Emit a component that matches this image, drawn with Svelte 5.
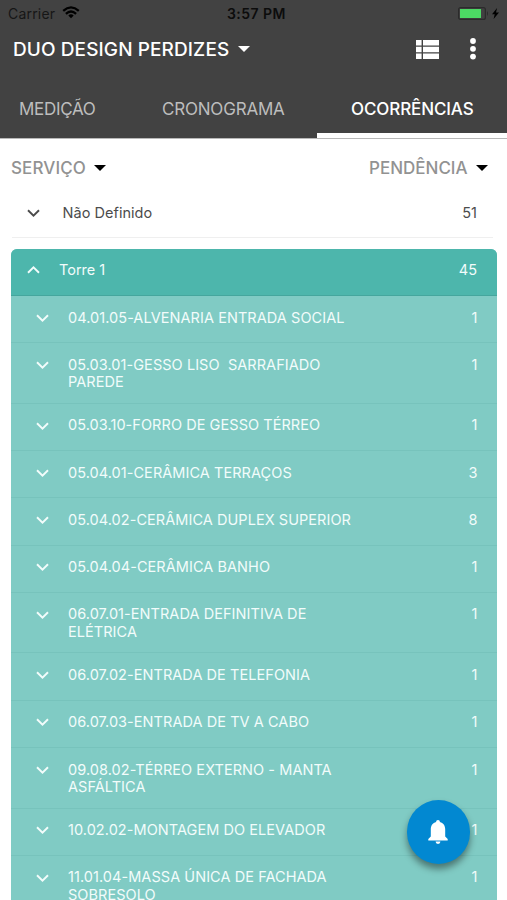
<script>
  const rows = [
    { lines: ['04.01.05-ALVENARIA ENTRADA SOCIAL'], count: 1 },
    { lines: ['05.03.01-GESSO LISO  SARRAFIADO', 'PAREDE'], count: 1 },
    { lines: ['05.03.10-FORRO DE GESSO TÉRREO'], count: 1 },
    { lines: ['05.04.01-CERÂMICA TERRAÇOS'], count: 3 },
    { lines: ['05.04.02-CERÂMICA DUPLEX SUPERIOR'], count: 8 },
    { lines: ['05.04.04-CERÂMICA BANHO'], count: 1 },
    { lines: ['06.07.01-ENTRADA DEFINITIVA DE', 'ELÉTRICA'], count: 1 },
    { lines: ['06.07.02-ENTRADA DE TELEFONIA'], count: 1 },
    { lines: ['06.07.03-ENTRADA DE TV A CABO'], count: 1 },
    { lines: ['09.08.02-TÉRREO EXTERNO - MANTA', 'ASFÁLTICA'], count: 1 },
    { lines: ['10.02.02-MONTAGEM DO ELEVADOR'], count: 1 },
    { lines: ['11.01.04-MASSA ÚNICA DE FACHADA', 'SOBRESOLO'], count: 1 }
  ];
</script>

{#snippet chevron(up)}
  <svg class="chevron" class:up width="13" height="8" viewBox="0 0 13 8">
    <path d="M1 1.2 6.5 6.6 12 1.2" fill="none" stroke="currentColor" stroke-width="1.9" />
  </svg>
{/snippet}

{#snippet caret()}
  <svg class="caret" width="12" height="6" viewBox="0 0 12 6"><path d="M0 0h12L6 6z" fill="currentColor" /></svg>
{/snippet}

<main>
  <header>
    <div class="status">
      <span class="carrier">Carrier</span>
      <svg class="wifi" width="18" height="13" viewBox="0 0 18 13">
        <g fill="none" stroke="#000" stroke-width="2.3">
          <path d="M1.2 4.8Q9-2 16.8 4.8" />
          <path d="M3.9 7.8Q9 3.2 14.1 7.8" />
        </g>
        <path d="M6.3 9.5Q9 7.2 11.7 9.5L9 12.3z" />
      </svg>
      <span class="time">3:57 PM</span>
      <svg class="battery" width="31" height="13" viewBox="0 0 31 13">
        <rect x=".6" y=".6" width="26.8" height="11.8" rx="2" fill="#414141" stroke="#2b2b2b" stroke-width="1.2" />
        <rect x="2" y="2" width="21" height="9" fill="#4cd964" />
        <path d="M29 4q2 2.5 0 5z" fill="#2b2b2b" />
      </svg>
      <svg class="bolt" width="7" height="11" viewBox="0 0 7 11"><path d="M5.1 0 0 6.2h2.7L1.6 11 7 4.6H4z" /></svg>
    </div>
    <div class="toolbar">
      <h1>DUO DESIGN PERDIZES</h1>
      {@render caret()}
      <svg class="list" width="23" height="19" viewBox="0 0 23 19" fill="#fff">
        <path d="M0 0h5.6v5.6H0zM7 0h16v5.6H7zM0 6.8h5.6v5.4H0zM7 6.8h16v5.4H7zM0 13.4h5.6V19H0zM7 13.4h16V19H7z" />
      </svg>
      <svg class="more" width="6" height="22" viewBox="0 0 6 22" fill="#fff">
        <circle cx="3" cy="3" r="2.9" /><circle cx="3" cy="10.8" r="2.9" /><circle cx="3" cy="18.6" r="2.9" />
      </svg>
    </div>
    <nav>
      <span class="tab t1">MEDIÇÃO</span>
      <span class="tab t2">CRONOGRAMA</span>
      <span class="tab active">OCORRÊNCIAS</span>
    </nav>
  </header>

  <div class="filters">
    <span class="filter f1">SERVIÇO</span>{@render caret()}
    <span class="filter f2">PENDÊNCIA</span>{@render caret()}
  </div>

  <div class="undefined-row">
    {@render chevron(false)}
    <span class="name">Não Definido</span>
    <span class="num">51</span>
  </div>

  <section>
    <div class="group">
      {@render chevron(true)}
      <span class="name">Torre 1</span>
      <span class="num">45</span>
    </div>
    {#each rows as row}
      <div class="row">
        {@render chevron(false)}
        <div class="label">
          {#each row.lines as line}<div>{line}</div>{/each}
        </div>
        <span class="num">{row.count}</span>
      </div>
    {/each}
  </section>

  <button class="fab" aria-label="Notificações">
    <svg width="20" height="24" viewBox="0 0 20 24" fill="#fff">
      <path d="M10 0c1.2 0 1.9.9 1.9 2.1 3.3.8 5.3 3.6 5.3 7.2v7.2L19.7 19v1.5H.3V19l2.5-2.5V9.3c0-3.6 2-6.4 5.3-7.2C8.1.9 8.8 0 10 0z" />
      <path d="M7.6 21.6h4.8a2.4 2.3 0 0 1-4.8 0z" />
    </svg>
  </button>
</main>

<style>
  :global(body) { margin: 0; overflow: hidden; }
  main {
    position: relative;
    width: 507px;
    height: 900px;
    overflow: hidden;
    background: #fff;
    font-family: Inter, "Liberation Sans", sans-serif;
    color: #4c4c4c;
  }
  header {
    height: 138px;
    background: #424242;
    border-bottom: 1px solid #b8b8b8;
    display: flex;
    flex-direction: column;
  }
  svg { display: block; flex: none; }
  span, h1 { white-space: nowrap; }
  .status { height: 27px; display: flex; align-items: center; color: #000; }
  .carrier { width: 47px; margin-left: 8px; font-size: 14px; letter-spacing: .2px; color: #161616; }
  .wifi { margin: 0 0 1px 7px; }
  .time { margin-left: 147px; width: 60px; font-size: 14px; font-weight: 600; letter-spacing: .45px; color: #0c0c0c; }
  .battery { margin-left: 171px; }
  .bolt { margin-left: 3px; }
  .toolbar { height: 46px; box-sizing: border-box; display: flex; align-items: center; color: #fff; }
  h1 { margin: 0 0 0 13px; width: 225px; font-size: 19px; font-weight: 500; letter-spacing: .1px; line-height: 24px; padding-top: 2px; }
  .list { margin: 0 0 0 166px; }
  .more { margin-left: 31px; }
  nav { flex: 1; display: flex; font-size: 17px; color: #bdbdbd; }
  .tab { box-sizing: border-box; line-height: 75px; height: 66px; }
  .t1 { width: 143px; padding-left: 19px; letter-spacing: -.3px; }
  .t2 { width: 174px; padding-left: 19px; letter-spacing: -.2px; }
  .active { width: 190px; padding-left: 34px; color: #fff; font-weight: 500; letter-spacing: -.1px; border-bottom: 5px solid #fff; }
  .filters { height: 51px; padding-top: 3px; display: flex; align-items: center; font-size: 17px; color: #929292; font-weight: 500; }
  .filters :global(.caret) { color: #000; }
  .f1 { margin-left: 11px; width: 83px; letter-spacing: .1px; }
  .f2 { margin-left: 263px; width: 107px; }
  .undefined-row { height: 44px; margin: 0 14px 11px 12px; border-bottom: 1px solid #efefef; display: flex; }
  .undefined-row .chevron { margin: 16px 0 0 14.500px; }
  .undefined-row .name { margin-left: 23px; flex: 1; letter-spacing: .04px; }
  .undefined-row .num { margin-right: 16px; }
  .name, .num { font-size: 14.500px; line-height: 40px; }
  section { margin: 0 10px 0 11px; border-radius: 6px 6px 0 0; overflow: hidden; background: #80cbc4; color: #f2fcfb; }
  .group { height: 46px; background: #4db6ac; border-bottom: 1px solid #45a69d; display: flex; }
  .group .chevron { margin: 17px 0 0 15.500px; }
  .up { transform: rotate(180deg); }
  .group .name { margin-left: 19.500px; line-height: 42px; flex: 1; }
  .group .num { margin-right: 20px; line-height: 42px; }
  .row { display: flex; box-sizing: border-box; min-height: 47.250px; padding: 12.600px 19.500px 12px 25px; border-bottom: 1px solid #77c3bc; }
  .row .chevron { margin-top: 5.200px; }
  .label { margin-left: 19px; flex: 1; font-size: 14.500px; line-height: 17.500px; letter-spacing: .06px; white-space: pre; }
  .row .num { line-height: 17.500px; }
  .fab {
    position: absolute;
    left: 406.500px;
    top: 800px;
    width: 63.500px;
    height: 63.500px;
    padding: 0;
    border: 0;
    border-radius: 50%;
    background: #0288d1;
    display: grid;
    place-items: center;
    box-shadow: 0 5px 7px rgba(0, 0, 0, .42);
  }
</style>
